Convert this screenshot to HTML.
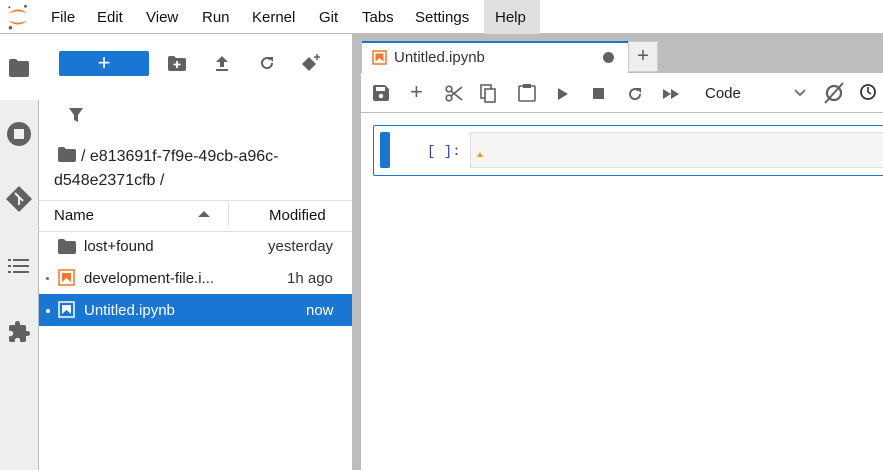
<!DOCTYPE html><html><head><style>
*{box-sizing:border-box;margin:0;padding:0}
body{width:883px;height:470px;overflow:hidden;font-family:"Liberation Sans",sans-serif;background:#fff;position:relative;color:#212121}
.abs{position:absolute}
.menu{top:0;left:0;width:883px;height:34px;border-bottom:1px solid #bdbdbd;background:#fff}
.menu span{position:absolute;top:9px;font-size:15px;color:#111}
.side{top:34px;left:0;width:39px;height:436px;background:#eee;border-right:1px solid #bdbdbd}
.fb{top:34px;left:39px;width:313px;height:436px;background:#fff}
.split{top:34px;left:352px;width:9px;height:436px;background:#bdbdbd}
.main{top:34px;left:361px;width:522px;height:436px;background:#fff}
.ico{fill:#616161}
</style></head><body>
<div class="abs menu">
<svg class="abs" style="left:6px;top:3px" width="24" height="28" viewBox="0 0 22 26"><path d="M2 10 Q11 2 20 10 Q11 5.5 2 10Z" fill="#f37726"/><path d="M2 16 Q11 24 20 16 Q11 20.5 2 16Z" fill="#f37726"/><circle cx="18" cy="3" r="1.4" fill="#616161"/><circle cx="4" cy="23" r="1.6" fill="#616161"/><circle cx="3" cy="4" r="1" fill="#616161"/></svg>
<span style="left:51px">File</span><span style="left:97px">Edit</span><span style="left:146px">View</span><span style="left:202px">Run</span><span style="left:252px">Kernel</span><span style="left:319px">Git</span><span style="left:362px">Tabs</span><span style="left:415px">Settings</span>
<div class="abs" style="left:484px;top:0;width:56px;height:34px;background:#e0e0e0"></div><span style="left:495px">Help</span>
</div>
<div class="abs side">
<div class="abs" style="left:0;top:0;width:39px;height:66px;background:#fff"></div>
<svg class="abs" style="left:8px;top:24px" width="22" height="20" viewBox="0 0 22 20"><path class="ico" d="M1 3 Q1 1 3 1 H8 L10 3 H19 Q21 3 21 5 V17 Q21 19 19 19 H3 Q1 19 1 17Z"/></svg>
<svg class="abs" style="left:6px;top:87px" width="26" height="26"><circle cx="13" cy="13" r="12" fill="#616161"/><rect x="8" y="8" width="10" height="10" fill="#eee"/></svg>
<svg class="abs" style="left:5px;top:151px" width="28" height="28" viewBox="0 0 28 28"><path class="ico" d="M14 1 L27 14 L14 27 L1 14Z"/><path d="M10 8 L14 12 V20 M14 12 L18 16" stroke="#eee" stroke-width="2" fill="none"/></svg>
<svg class="abs" style="left:8px;top:224px" width="22" height="16"><g fill="#616161"><rect x="0" y="1" width="3" height="2"/><rect x="5" y="1" width="16" height="2"/><rect x="0" y="7" width="3" height="2"/><rect x="5" y="7" width="16" height="2"/><rect x="0" y="13" width="3" height="2"/><rect x="5" y="13" width="16" height="2"/></g></svg>
<svg class="abs" style="left:7px;top:286px" width="24" height="24" viewBox="0 0 24 24"><path class="ico" d="M20.5 11H19V7a2 2 0 0 0-2-2h-4V3.5a2.5 2.5 0 0 0-5 0V5H4a2 2 0 0 0-2 2v3.8h1.5a2.7 2.7 0 0 1 0 5.4H2V20a2 2 0 0 0 2 2h3.8v-1.5a2.7 2.7 0 0 1 5.4 0V22H17a2 2 0 0 0 2-2v-4h1.5a2.5 2.5 0 0 0 0-5z"/></svg>
</div>
<div class="abs fb">
<div class="abs" style="left:20px;top:17px;width:90px;height:25px;background:#1976d2;border-radius:2px;color:#fff;font-size:22px;text-align:center;line-height:24px">+</div>
<svg class="abs" style="left:129px;top:22px" width="18" height="15" viewBox="0 0 18 15"><path class="ico" d="M0 2 Q0 0 2 0 H6 L8 2 H16 Q18 2 18 4 V13 Q18 15 16 15 H2 Q0 15 0 13Z"/><path d="M9 5 V12 M5.5 8.5 H12.5" stroke="#fff" stroke-width="1.8"/></svg>
<svg class="abs" style="left:175px;top:21px" width="16" height="17"><path class="ico" d="M8 1 L14 7 H10 V12 H6 V7 H2Z M2 14 H14 V16 H2Z"/></svg>
<svg class="abs" style="left:220px;top:21px" width="16" height="16" viewBox="0 0 16 16"><path d="M13 8 A5 5 0 1 1 11.5 4.5" stroke="#616161" stroke-width="2" fill="none"/><path class="ico" d="M9 2 H14 V7Z"/></svg>
<svg class="abs" style="left:263px;top:19px" width="20" height="20" viewBox="0 0 20 20"><path class="ico" d="M7 4 L14 11 L7 18 L0 11Z"/><path d="M15 1 V7 M12 4 H18" stroke="#616161" stroke-width="1.5"/></svg>
<svg class="abs" style="left:30px;top:73px" width="14" height="16"><path class="ico" d="M0 1 H14 L9 8 V15 L5 13 V8Z"/></svg>
<svg class="abs" style="left:19px;top:113px" width="18" height="15" viewBox="0 0 18 15"><path class="ico" d="M0 2 Q0 0 2 0 H6 L8 2 H16 Q18 2 18 4 V13 Q18 15 16 15 H2 Q0 15 0 13Z"/></svg>
<div class="abs" style="left:42px;top:111px;font-size:16px;color:#212121;line-height:24px;width:260px">/ e813691f-7f9e-49cb-a96c-</div>
<div class="abs" style="left:15px;top:135px;font-size:16px;color:#212121;line-height:24px">d548e2371cfb /</div>
<div class="abs" style="left:0;top:166px;width:313px;height:1px;background:#e0e0e0"></div>
<div class="abs" style="left:15px;top:173px;font-size:15px;color:#111">Name</div>
<svg class="abs" style="left:159px;top:176px" width="12" height="8"><path d="M0 7 L6 1 L12 7Z" fill="#616161"/></svg>
<div class="abs" style="left:189px;top:168px;width:1px;height:24px;background:#e0e0e0"></div>
<div class="abs" style="left:230px;top:173px;font-size:15px;color:#111">Modified</div>
<div class="abs" style="left:0;top:197px;width:313px;height:1px;background:#e0e0e0"></div>
<svg class="abs" style="left:19px;top:205px" width="18" height="15" viewBox="0 0 18 15"><path class="ico" d="M0 2 Q0 0 2 0 H6 L8 2 H16 Q18 2 18 4 V13 Q18 15 16 15 H2 Q0 15 0 13Z"/></svg>
<div class="abs" style="left:45px;top:204px;font-size:15px">lost+found</div>
<div class="abs" style="left:229px;top:204px;font-size:15px;color:#333">yesterday</div>
<div class="abs" style="left:7px;top:243px;width:3px;height:3px;border-radius:50%;background:#388e3c"></div>
<svg class="abs" style="left:19px;top:235px" width="17" height="17"><rect x="1" y="1" width="15" height="15" fill="none" stroke="#f37726" stroke-width="1.5"/><path d="M4 4 H13 V13 L8.5 9 L4 13Z" fill="#f37726"/></svg>
<div class="abs" style="left:45px;top:236px;font-size:15px">development-file.i...</div>
<div class="abs" style="left:248px;top:236px;font-size:15px;color:#333">1h ago</div>
<div class="abs" style="left:0;top:260px;width:313px;height:32px;background:#1976d2"></div>
<div class="abs" style="left:7px;top:275px;width:4px;height:4px;border-radius:50%;background:#fff"></div>
<svg class="abs" style="left:19px;top:267px" width="17" height="17"><rect x="1" y="1" width="15" height="15" fill="none" stroke="#fff" stroke-width="1.5"/><path d="M4 4 H13 V13 L8.5 9 L4 13Z" fill="#fff"/></svg>
<div class="abs" style="left:45px;top:268px;font-size:15px;color:#fff">Untitled.ipynb</div>
<div class="abs" style="left:267px;top:268px;font-size:15px;color:#fff">now</div>
</div>
<div class="abs split"></div>
<div class="abs main">
<div class="abs" style="left:0;top:0;width:522px;height:39px;background:#bdbdbd"></div>
<div class="abs" style="left:1px;top:7px;width:266px;height:32px;background:#fff;border-top:2px solid #1976d2"></div>
<svg class="abs" style="left:11px;top:16px" width="15" height="15"><rect x="1" y="1" width="13" height="13" fill="none" stroke="#f37726" stroke-width="1.5"/><path d="M3.5 3.5 H11.5 V11.5 L7.5 8 L3.5 11.5Z" fill="#f37726"/></svg>
<div class="abs" style="left:33px;top:15px;font-size:15px;color:#333">Untitled.ipynb</div>
<div class="abs" style="left:242px;top:18px;width:11px;height:11px;border-radius:50%;background:#616161"></div>
<div class="abs" style="left:267px;top:7px;width:30px;height:31px;background:#eee;border:1px solid #ccc;text-align:center;font-size:20px;line-height:28px;color:#555">+</div>
<div class="abs" style="left:0;top:78px;width:522px;height:1px;background:#bdbdbd"></div>
<svg class="abs" style="left:12px;top:51px" width="16" height="16"><path class="ico" d="M0 2 Q0 0 2 0 H12 L16 4 V14 Q16 16 14 16 H2 Q0 16 0 14Z"/><rect x="3" y="2" width="9" height="4" fill="#fff"/><circle cx="8" cy="11" r="2.2" fill="#fff"/></svg>
<div class="abs" style="left:49px;top:45px;font-size:22px;color:#616161">+</div>
<svg class="abs" style="left:84px;top:51px" width="18" height="17" viewBox="0 0 18 17"><circle cx="4" cy="4" r="2.8" stroke="#616161" stroke-width="1.7" fill="none"/><circle cx="4" cy="13" r="2.8" stroke="#616161" stroke-width="1.7" fill="none"/><path d="M6 6 L17 15 M6 11 L17 2" stroke="#616161" stroke-width="1.7"/></svg>
<svg class="abs" style="left:119px;top:50px" width="16" height="19"><rect x="1" y="1" width="10" height="13" fill="none" stroke="#616161" stroke-width="1.6"/><rect x="5" y="5" width="10" height="13" fill="#fff" stroke="#616161" stroke-width="1.6"/></svg>
<svg class="abs" style="left:157px;top:49px" width="18" height="19"><rect x="1" y="3" width="16" height="15" rx="1" fill="none" stroke="#616161" stroke-width="1.6"/><rect x="5" y="1" width="8" height="4" fill="#616161"/></svg>
<svg class="abs" style="left:197px;top:54px" width="10" height="12"><path class="ico" d="M0 0 L10 6 L0 12Z"/></svg>
<div class="abs" style="left:232px;top:54px;width:11px;height:11px;background:#616161"></div>
<svg class="abs" style="left:266px;top:52px" width="16" height="16" viewBox="0 0 16 16"><path d="M13 8 A5 5 0 1 1 11.5 4.5" stroke="#616161" stroke-width="2" fill="none"/><path class="ico" d="M9 2 H14 V7Z"/></svg>
<svg class="abs" style="left:302px;top:55px" width="16" height="10"><path class="ico" d="M0 0 L8 5 L0 10Z M8 0 L16 5 L8 10Z"/></svg>
<div class="abs" style="left:344px;top:51px;font-size:15px;color:#222">Code</div>
<svg class="abs" style="left:433px;top:55px" width="12" height="8"><path d="M1 1 L6 6 L11 1" stroke="#616161" stroke-width="1.6" fill="none"/></svg>
<svg class="abs" style="left:462px;top:47px" width="22" height="24"><circle cx="11" cy="12" r="7" stroke="#616161" stroke-width="2.2" fill="none"/><path d="M2 22 L20 2" stroke="#616161" stroke-width="2"/></svg>
<svg class="abs" style="left:498px;top:49px" width="18" height="18"><circle cx="9" cy="9" r="7" stroke="#333" stroke-width="1.8" fill="none"/><path d="M9 4 V9 L12 11" stroke="#333" stroke-width="1.6" fill="none"/></svg>
<div class="abs" style="left:12px;top:91px;width:520px;height:51px;border:1px solid #1976d2;border-radius:2px"></div>
<div class="abs" style="left:19px;top:98px;width:10px;height:36px;background:#1976d2;border-radius:2px"></div>
<div class="abs" style="left:66px;top:110px;font-family:'Liberation Mono',monospace;font-size:14px;color:#303f9f">[ ]:</div>
<div class="abs" style="left:109px;top:98px;width:420px;height:36px;background:#f5f5f5;border:1px solid #e0e0e0"></div>
<svg class="abs" style="left:116px;top:118px" width="6" height="5"><path d="M0 5 L3 0 L6 5Z" fill="#ff9800"/></svg>
</div>
</body></html>
